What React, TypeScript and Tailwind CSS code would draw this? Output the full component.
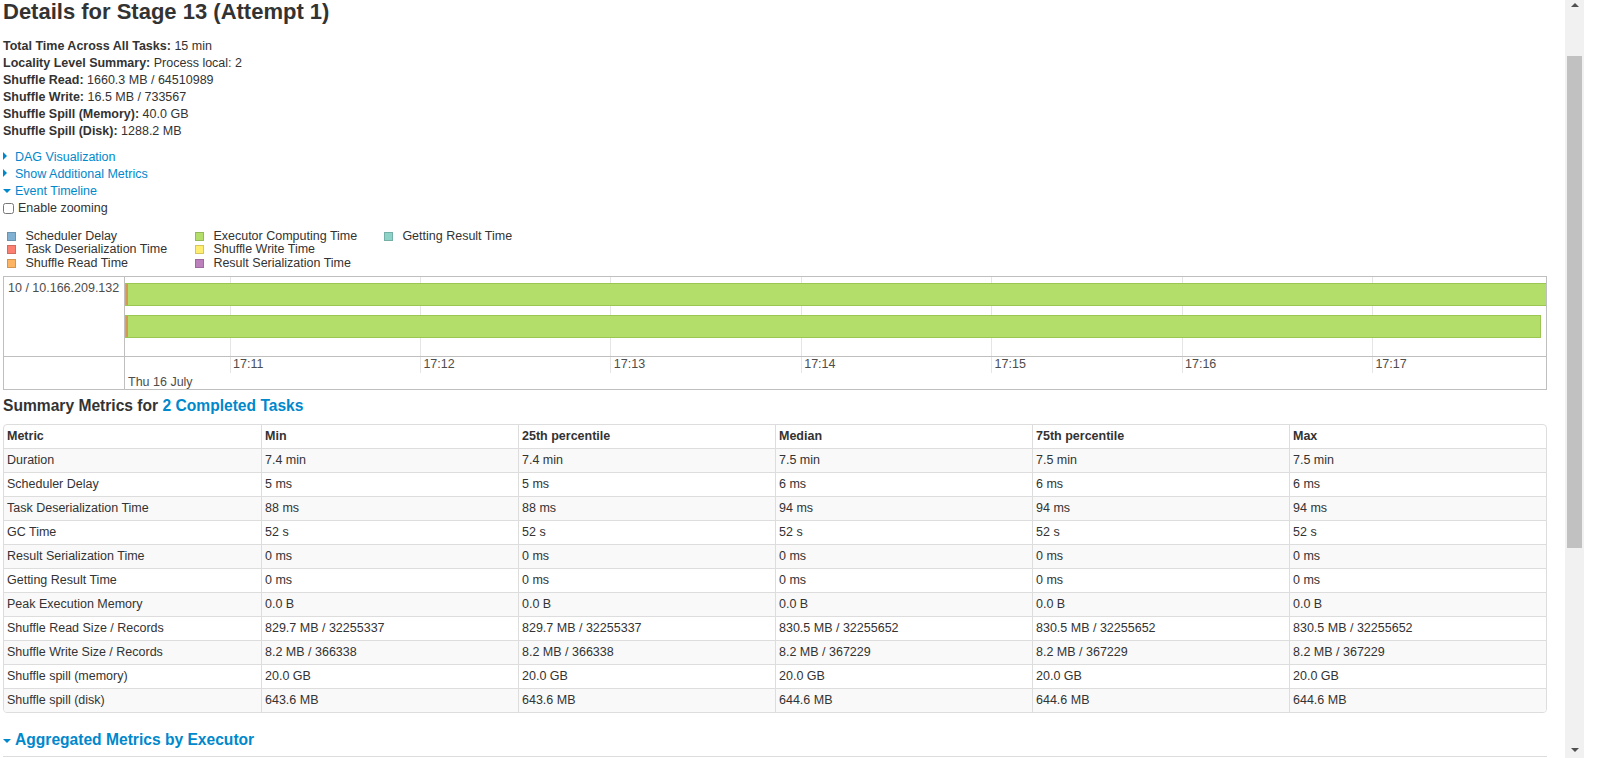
import React from "react";

interface LegendItem {
  label: string;
  fill: string;
  stroke: string;
}

const legendCols: LegendItem[][] = [
  [
    { label: "Scheduler Delay", fill: "bg-[#80b1d3]", stroke: "border-[#6b94b0]" },
    { label: "Task Deserialization Time", fill: "bg-[#fb8072]", stroke: "border-[#d26b5f]" },
    { label: "Shuffle Read Time", fill: "bg-[#fdb462]", stroke: "border-[#d39651]" },
  ],
  [
    { label: "Executor Computing Time", fill: "bg-[#b3de69]", stroke: "border-[#95b957]" },
    { label: "Shuffle Write Time", fill: "bg-[#ffed6f]", stroke: "border-[#d5c65c]" },
    { label: "Result Serialization Time", fill: "bg-[#bc80bd]", stroke: "border-[#9d6b9e]" },
  ],
  [{ label: "Getting Result Time", fill: "bg-[#8dd3c7]", stroke: "border-[#75b0a6]" }],
];

const summary: [string, string][] = [
  ["Total Time Across All Tasks:", "15 min"],
  ["Locality Level Summary:", "Process local: 2"],
  ["Shuffle Read:", "1660.3 MB / 64510989"],
  ["Shuffle Write:", "16.5 MB / 733567"],
  ["Shuffle Spill (Memory):", "40.0 GB"],
  ["Shuffle Spill (Disk):", "1288.2 MB"],
];

const header = ["Metric", "Min", "25th percentile", "Median", "75th percentile", "Max"];

const rows: string[][] = [
  ["Duration", "7.4 min", "7.4 min", "7.5 min", "7.5 min", "7.5 min"],
  ["Scheduler Delay", "5 ms", "5 ms", "6 ms", "6 ms", "6 ms"],
  ["Task Deserialization Time", "88 ms", "88 ms", "94 ms", "94 ms", "94 ms"],
  ["GC Time", "52 s", "52 s", "52 s", "52 s", "52 s"],
  ["Result Serialization Time", "0 ms", "0 ms", "0 ms", "0 ms", "0 ms"],
  ["Getting Result Time", "0 ms", "0 ms", "0 ms", "0 ms", "0 ms"],
  ["Peak Execution Memory", "0.0 B", "0.0 B", "0.0 B", "0.0 B", "0.0 B"],
  [
    "Shuffle Read Size / Records",
    "829.7 MB / 32255337",
    "829.7 MB / 32255337",
    "830.5 MB / 32255652",
    "830.5 MB / 32255652",
    "830.5 MB / 32255652",
  ],
  [
    "Shuffle Write Size / Records",
    "8.2 MB / 366338",
    "8.2 MB / 366338",
    "8.2 MB / 367229",
    "8.2 MB / 367229",
    "8.2 MB / 367229",
  ],
  ["Shuffle spill (memory)", "20.0 GB", "20.0 GB", "20.0 GB", "20.0 GB", "20.0 GB"],
  ["Shuffle spill (disk)", "643.6 MB", "643.6 MB", "644.6 MB", "644.6 MB", "644.6 MB"],
];

const ticks = ["17:11", "17:12", "17:13", "17:14", "17:15", "17:16", "17:17"];

const ArrowClosed = () => (
  <span className="inline-block w-[12px]">
    <span className="inline-block h-0 w-0 border-y-[4px] border-l-[4.5px] border-y-transparent border-l-[#0088cc] align-[1px]" />
  </span>
);

const ArrowOpen = () => (
  <span className="inline-block w-[12px]">
    <span className="inline-block h-0 w-0 border-x-[4.5px] border-t-[4.5px] border-x-transparent border-t-[#0088cc] align-[2px]" />
  </span>
);

const Timeline = () => {
  return (
    <div className="mt-[6px] w-[1544px] border border-[#bfbfbf] text-[12.5px] text-[#4d4d4d]">
      <div className="flex h-[80px] border-b border-[#bfbfbf]">
        <div className="w-[121px] shrink-0 border-r border-[#bfbfbf] pl-[4px] pt-[3px] leading-[17px]">
          10 / 10.166.209.132
        </div>
        <div className="relative flex-1 overflow-hidden">
          {ticks.map((t, i) => (
            <div
              key={t}
              className="absolute top-0 h-full w-px bg-[#e5e5e5]"
              style={{ left: 104.6 + i * 190.4 }}
            />
          ))}
          <div className="absolute left-0 right-[-2px] top-[6px] h-[23px] border border-[#9cc653] bg-[#b3de69]">
            <div className="h-full w-[2px] bg-[#d49a55]" />
          </div>
          <div className="absolute left-0 right-[5px] top-[38px] h-[23px] border border-[#9cc653] bg-[#b3de69]">
            <div className="h-full w-[2px] bg-[#d49a55]" />
          </div>
        </div>
      </div>
      <div className="flex h-[32px]">
        <div className="w-[121px] shrink-0 border-r border-[#bfbfbf]" />
        <div className="relative flex-1">
          {ticks.map((t, i) => (
            <React.Fragment key={t}>
              <div
                className="absolute top-0 h-[16px] w-px bg-[#e5e5e5]"
                style={{ left: 104.6 + i * 190.4 }}
              />
              <span
                className="absolute top-0 leading-[14px]"
                style={{ left: 108 + i * 190.4 }}
              >
                {t}
              </span>
            </React.Fragment>
          ))}
          <span className="absolute left-[3px] top-[17.7px] leading-[14px]">Thu 16 July</span>
        </div>
      </div>
    </div>
  );
};

const MetricsTable = () => {
  return (
    <div className="mt-[9px] w-[1544px] overflow-hidden rounded-[4px] border border-[#ddd] text-[12.5px]">
      <table className="w-full table-fixed border-separate border-spacing-0">
        <thead>
          <tr>
            {header.map((h, i) => (
              <th
                key={h}
                className={`h-[23px] px-[3px] text-left font-bold ${i > 0 ? "border-l border-[#ddd]" : ""}`}
              >
                {h}
              </th>
            ))}
          </tr>
        </thead>
        <tbody>
          {rows.map((r, ri) => (
            <tr key={r[0]} className={ri % 2 === 0 ? "bg-[#f9f9f9]" : "bg-white"}>
              {r.map((c, ci) => (
                <td
                  key={ci}
                  className={`h-[24px] border-t border-[#ddd] px-[3px] ${ci > 0 ? "border-l" : ""}`}
                >
                  {c}
                </td>
              ))}
            </tr>
          ))}
        </tbody>
      </table>
    </div>
  );
};

const Scrollbar = () => (
  <div className="flex w-[19px] shrink-0 flex-col bg-[#f1f1f1]">
    <div className="flex h-[17px] justify-center pt-[3px]">
      <span className="h-0 w-0 border-x-[4px] border-b-[4px] border-x-transparent border-b-[#505050]" />
    </div>
    <div className="h-[39px]" />
    <div className="mx-[2px] h-[492px] bg-[#c1c1c1]" />
    <div className="flex-1" />
    <div className="flex h-[17px] items-start justify-center pt-[7px]">
      <span className="h-0 w-0 border-x-[4px] border-t-[4px] border-x-transparent border-t-[#505050]" />
    </div>
  </div>
);

export default function App() {
  return (
    <div className="flex h-[758px] overflow-hidden bg-white font-['Liberation_Sans',Arial,sans-serif] text-[#333]">
      <div className="w-[1565px] shrink-0 pl-[3px]">
        <h3 className="mt-[1px] text-[22px] font-bold leading-[22px]">Details for Stage 13 (Attempt 1)</h3>

        <ul className="mt-[14.5px] text-[12.5px] leading-[17px]">
          {summary.map(([k, v]) => (
            <li key={k}>
              <strong>{k}</strong> {v}
            </li>
          ))}
        </ul>

        <div className="mt-[9.7px] text-[12.5px] leading-[17px]">
          <div className="text-[#0088cc]">
            <ArrowClosed />
            <span>DAG Visualization</span>
          </div>
          <div className="text-[#0088cc]">
            <ArrowClosed />
            <span>Show Additional Metrics</span>
          </div>
          <div className="text-[#0088cc]">
            <ArrowOpen />
            <span>Event Timeline</span>
          </div>
          <div>
            <input
              type="checkbox"
              className="m-0 mr-[4px] h-[11px] w-[11px] align-[-2px]"
            />
            Enable zooming
          </div>
        </div>

        <div className="mt-[12.8px] flex pl-[4.4px] text-[12.5px]">
          {legendCols.map((col, i) => (
            <div key={i} className={i === 0 ? "w-[188px]" : "w-[189px]"}>
              {col.map((item) => (
                <div key={item.label} className="flex h-[13.33px] items-center gap-[9px] leading-[13.33px]">
                  <span className={`h-[9px] w-[9px] border ${item.fill} ${item.stroke}`} />
                  <span>{item.label}</span>
                </div>
              ))}
            </div>
          ))}
        </div>

        <Timeline />

        <h4 className="mt-[7px] text-[15.6px] font-bold leading-[18px]">
          Summary Metrics for <span className="text-[#0088cc]">2 Completed Tasks</span>
        </h4>

        <MetricsTable />

        <h4 className="mt-[18px] text-[15.6px] font-bold leading-[18px] text-[#0088cc]">
          <ArrowOpen />
          Aggregated Metrics by Executor
        </h4>
        <div className="mt-[7px] w-[1544px] border-t border-[#ddd]" />
      </div>
      <Scrollbar />
      <div className="flex-1" />
    </div>
  );
}
